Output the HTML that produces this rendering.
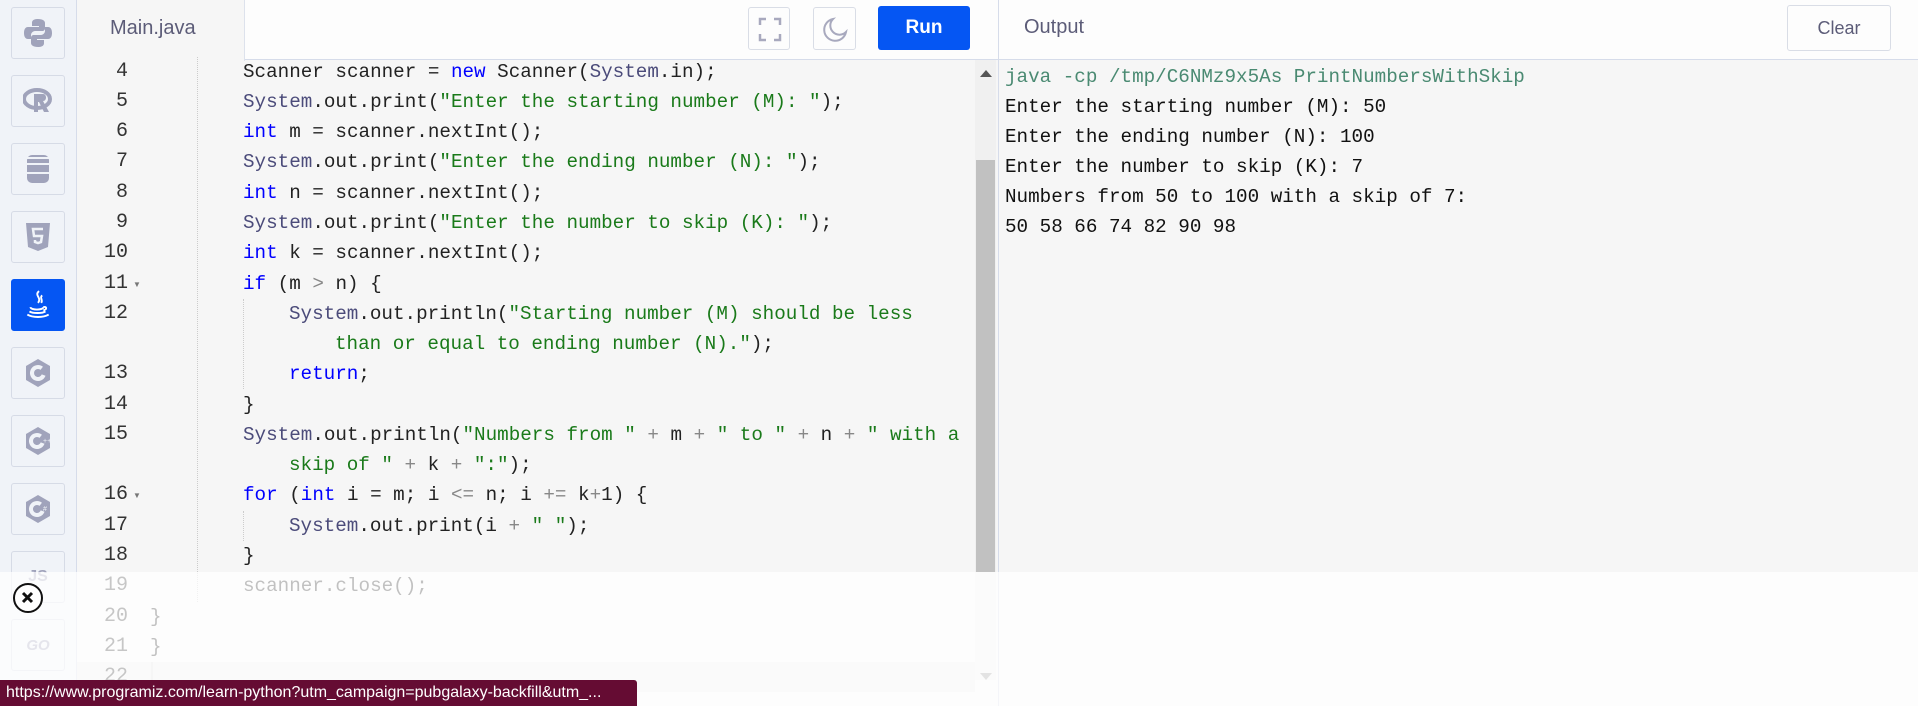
<!DOCTYPE html>
<html><head><meta charset="utf-8">
<style>
*{margin:0;padding:0;box-sizing:border-box}
body{width:1918px;height:706px;overflow:hidden;background:#f6f6f6;font-family:"Liberation Sans",sans-serif;position:relative}
.abs{position:absolute}
#side{left:0;top:0;width:77px;height:706px;background:#f0f3f8;border-right:1px solid #d6dcea}
.ib{position:absolute;left:11px;width:54px;height:52px;border:1px solid #d6dbe6;border-radius:3px;background:#f0f3f8;display:flex;align-items:center;justify-content:center}
#hdr{left:77px;top:0;width:921px;height:60px;background:#fdfdfd;border-bottom:1px solid #d6dcea}
#tab{left:77px;top:0;width:168px;height:61px;background:#f6f6f6;border-right:1px solid #dde2ec}
.btn{position:absolute;border:1px solid #d9dde6;border-radius:3px;background:#fdfdfd}
#ohdr{left:998px;top:0;width:920px;height:60px;background:#fdfdfd;border-bottom:1px solid #d6dcea;border-left:1px solid #d6dcea}
#out{left:998px;top:60px;width:920px;height:646px;background:#f6f6f6;border-left:1px solid #d6dcea}
.c{position:absolute;font-family:"Liberation Mono",monospace;font-size:19.25px;line-height:30px;white-space:pre;color:#222}
.n{position:absolute;right:0;width:60px;text-align:right;font-family:"Liberation Mono",monospace;font-size:20px;line-height:30px;color:#333}
.k{color:#0000ff}.s{color:#1a7a1a}.t{color:#4b4b7a}.o{color:#888}
.g{position:absolute;width:0;border-left:1px dotted #ccc}
</style></head><body>
<div id="side" class="abs">
  <div class="ib" style="top:7px"><svg width="28" height="30" viewBox="0 0 28 30"><path d="M14 1c-6 0-6 3-6 4v3h7v1H4c-3 0-4 3-4 6s1 6 4 6h3v-4c0-2 2-4 4-4h7c2 0 3-1 3-3V5c0-2-2-4-7-4z" fill="#a0a3bb"/><path d="M14 29c6 0 6-3 6-4v-3h-7v-1h11c3 0 4-3 4-6s-1-6-4-6h-3v4c0 2-2 4-4 4h-7c-2 0-3 1-3 3v5c0 2 2 4 7 4z" fill="#a0a3bb"/></svg></div>
  <div class="ib" style="top:75px"><svg width="30" height="26" viewBox="0 0 30 26"><ellipse cx="14" cy="11" rx="13" ry="9" fill="none" stroke="#a0a3bb" stroke-width="4"/><path d="M11 6h9c4 0 4 7 0 7l6 11h-5l-5-10h-1v10h-4z" fill="#a0a3bb"/></svg></div>
  <div class="ib" style="top:143px"><svg width="24" height="30" viewBox="0 0 24 30"><rect x="1" y="1" width="22" height="28" rx="5" fill="#a0a3bb"/><path d="M1 10h22M1 19h22M1 4h22" stroke="#f0f3f8" stroke-width="2"/></svg></div>
  <div class="ib" style="top:211px"><svg width="26" height="30" viewBox="0 0 26 30"><path d="M1 1h24l-2 24-10 4-10-4z" fill="#a0a3bb"/><path d="M18 7H8l1 7h8l-1 6-3 1-3-1v-2" fill="none" stroke="#f0f3f8" stroke-width="2.5"/></svg></div>
  <div class="ib" style="top:279px;background:#0556f3;border-color:#0556f3"><svg width="26" height="32" viewBox="0 0 24 30"><path d="M13 2c-5 4 3 6-1 11M16 6c-3 2 1 4-1 7" fill="none" stroke="#fff" stroke-width="1.8"/><path d="M5 17c0 3 12 3 12 0M4 21c3 2 12 2 15 0M2 24c5 3 15 3 20 0M17 17c3-1 4 2 0 3" fill="none" stroke="#fff" stroke-width="1.8"/></svg></div>
  <div class="ib" style="top:347px"><svg width="28" height="30" viewBox="0 0 28 30"><path d="M14 1l12 7v14l-12 7-12-7V8z" fill="#a0a3bb"/><circle cx="14" cy="15" r="6" fill="none" stroke="#f0f3f8" stroke-width="4" stroke-dasharray="30 8" transform="rotate(20 14 15)"/></svg></div>
  <div class="ib" style="top:415px"><svg width="28" height="30" viewBox="0 0 28 30"><path d="M14 1l12 7v14l-12 7-12-7V8z" fill="#a0a3bb"/><circle cx="13" cy="15" r="6" fill="none" stroke="#f0f3f8" stroke-width="4" stroke-dasharray="30 8" transform="rotate(20 13 15)"/><text x="19" y="17" font-size="7" fill="#f0f3f8" font-family="Liberation Sans">++</text></svg></div>
  <div class="ib" style="top:483px"><svg width="28" height="30" viewBox="0 0 28 30"><path d="M14 1l12 7v14l-12 7-12-7V8z" fill="#a0a3bb"/><circle cx="13" cy="15" r="6" fill="none" stroke="#f0f3f8" stroke-width="4" stroke-dasharray="30 8" transform="rotate(20 13 15)"/><text x="19" y="17" font-size="7" fill="#f0f3f8" font-family="Liberation Sans">#</text></svg></div>
  <div class="ib" style="top:551px;font:bold 16px 'Liberation Sans';color:#a0a3bb">JS</div>
  <div class="ib" style="top:619px;font:italic bold 15px 'Liberation Sans';color:#a0a3bb">GO</div>
</div>
<div id="hdr" class="abs"></div>
<div id="tab" class="abs"><div class="abs" style="left:33px;top:17px;font-size:20px;color:#5c5c78">Main.java</div></div>
<div class="btn" style="left:748px;top:7px;width:42px;height:43px"><svg width="42" height="43" viewBox="0 0 42 43"><path d="M11 17v-6h6M25 11h6v6M31 26v6h-6M17 32h-6v-6" fill="none" stroke="#a8a9be" stroke-width="2.5"/></svg></div>
<div class="btn" style="left:813px;top:7px;width:43px;height:43px"><svg width="43" height="43" viewBox="0 0 43 43"><path d="M19 11a11 11 0 1 0 13 13a9 9 0 0 1-13-13z" fill="none" stroke="#a8a9be" stroke-width="2"/></svg></div>
<div class="abs" style="left:878px;top:6px;width:92px;height:44px;background:#0556f3;border-radius:3px;color:#fff;font-weight:bold;font-size:19px;text-align:center;line-height:44px">Run</div>

<div id="ohdr" class="abs"><div class="abs" style="left:25px;top:16px;font-size:20px;color:#5c5c78">Output</div>
<div class="btn" style="left:788px;top:5px;width:104px;height:46px;font-size:18px;color:#5c5c78;text-align:center;line-height:44px">Clear</div></div>
<div id="out" class="abs"></div>
<div class="c" style="left:1005px;top:62px;color:#4a8a72">java -cp /tmp/C6NMz9x5As PrintNumbersWithSkip</div>
<div class="c" style="left:1005px;top:92px;color:#111">Enter the starting number (M): 50</div>
<div class="c" style="left:1005px;top:122px;color:#111">Enter the ending number (N): 100</div>
<div class="c" style="left:1005px;top:152px;color:#111">Enter the number to skip (K): 7</div>
<div class="c" style="left:1005px;top:182px;color:#111">Numbers from 50 to 100 with a skip of 7:</div>
<div class="c" style="left:1005px;top:212px;color:#111">50 58 66 74 82 90 98</div>

<div class="abs" style="left:975px;top:60px;width:21px;height:620px;background:#f0f0f0"></div>
<div class="abs" style="left:976px;top:160px;width:19px;height:412px;background:#c1c1c1"></div>
<div class="abs" style="left:980px;top:70px;width:0;height:0;border-left:6px solid transparent;border-right:6px solid transparent;border-bottom:7px solid #555"></div>
<div class="abs" style="left:980px;top:673px;width:0;height:0;border-left:6px solid transparent;border-right:6px solid transparent;border-top:7px solid #999"></div>
<div class="abs" style="left:77px;top:662px;width:898px;height:30px;background:#ececec"></div>
<div class="abs" style="left:151px;top:662px;width:2px;height:30px;background:#ddd"></div>

<div class="abs" style="left:68px;top:0;width:60px;height:706px">
<div class="n" style="top:57px">4</div><div class="n" style="top:87px">5</div><div class="n" style="top:117px">6</div><div class="n" style="top:147px">7</div><div class="n" style="top:178px">8</div><div class="n" style="top:208px">9</div><div class="n" style="top:238px">10</div><div class="n" style="top:269px">11</div><div class="n" style="top:299px">12</div><div class="n" style="top:359px">13</div><div class="n" style="top:390px">14</div><div class="n" style="top:420px">15</div><div class="n" style="top:480px">16</div><div class="n" style="top:511px">17</div><div class="n" style="top:541px">18</div><div class="n" style="top:571px">19</div><div class="n" style="top:602px">20</div><div class="n" style="top:632px">21</div><div class="n" style="top:662px">22</div>
</div>
<div class="abs" style="left:133px;top:280px;font-size:8px;color:#777">▼</div>
<div class="abs" style="left:133px;top:491px;font-size:8px;color:#777">▼</div>

<div class="g" style="left:197px;top:57px;height:545px"></div>
<div class="g" style="left:243px;top:299px;height:90px"></div>
<div class="g" style="left:243px;top:511px;height:30px"></div>

<div class="c" style="left:243px;top:57px">Scanner scanner = <span class="k">new</span> Scanner(<span class="t">System</span>.in);</div>
<div class="c" style="left:243px;top:87px"><span class="t">System</span>.out.print(<span class="s">"Enter the starting number (M): "</span>);</div>
<div class="c" style="left:243px;top:117px"><span class="k">int</span> m = scanner.nextInt();</div>
<div class="c" style="left:243px;top:147px"><span class="t">System</span>.out.print(<span class="s">"Enter the ending number (N): "</span>);</div>
<div class="c" style="left:243px;top:178px"><span class="k">int</span> n = scanner.nextInt();</div>
<div class="c" style="left:243px;top:208px"><span class="t">System</span>.out.print(<span class="s">"Enter the number to skip (K): "</span>);</div>
<div class="c" style="left:243px;top:238px"><span class="k">int</span> k = scanner.nextInt();</div>
<div class="c" style="left:243px;top:269px"><span class="k">if</span> (m <span class="o">&gt;</span> n) {</div>
<div class="c" style="left:289px;top:299px"><span class="t">System</span>.out.println(<span class="s">"Starting number (M) should be less</span></div>
<div class="c" style="left:335px;top:329px"><span class="s">than or equal to ending number (N)."</span>);</div>
<div class="c" style="left:289px;top:359px"><span class="k">return</span>;</div>
<div class="c" style="left:243px;top:390px">}</div>
<div class="c" style="left:243px;top:420px"><span class="t">System</span>.out.println(<span class="s">"Numbers from "</span> <span class="o">+</span> m <span class="o">+</span> <span class="s">" to "</span> <span class="o">+</span> n <span class="o">+</span> <span class="s">" with a</span></div>
<div class="c" style="left:289px;top:450px"><span class="s">skip of "</span> <span class="o">+</span> k <span class="o">+</span> <span class="s">":"</span>);</div>
<div class="c" style="left:243px;top:480px"><span class="k">for</span> (<span class="k">int</span> i = m; i <span class="o">&lt;=</span> n; i <span class="o">+=</span> k<span class="o">+</span>1) {</div>
<div class="c" style="left:289px;top:511px"><span class="t">System</span>.out.print(i <span class="o">+</span> <span class="s">" "</span>);</div>
<div class="c" style="left:243px;top:541px">}</div>
<div class="c" style="left:243px;top:571px">scanner.close();</div>
<div class="c" style="left:150px;top:602px">}</div>
<div class="c" style="left:150px;top:632px">}</div>

<div class="abs" style="left:0;top:572px;width:1918px;height:134px;background:rgba(255,255,255,0.72)"></div>
<div class="abs" style="left:13px;top:583px;width:30px;height:30px;border:2.5px solid #111;border-radius:50%;background:#fff"><svg width="25" height="25" viewBox="0 0 25 25" style="position:absolute;left:0;top:0"><path d="M8 8l9 9M17 8l-9 9" stroke="#111" stroke-width="3"/></svg></div>
<div class="abs" style="left:0;top:680px;width:637px;height:26px;background:#650c33;border-top-right-radius:3px;color:#fff;font-size:16px;line-height:26px;padding-left:6px;white-space:nowrap;overflow:hidden">https://www.programiz.com/learn-python?utm_campaign=pubgalaxy-backfill&amp;utm_...</div>
</body></html>
